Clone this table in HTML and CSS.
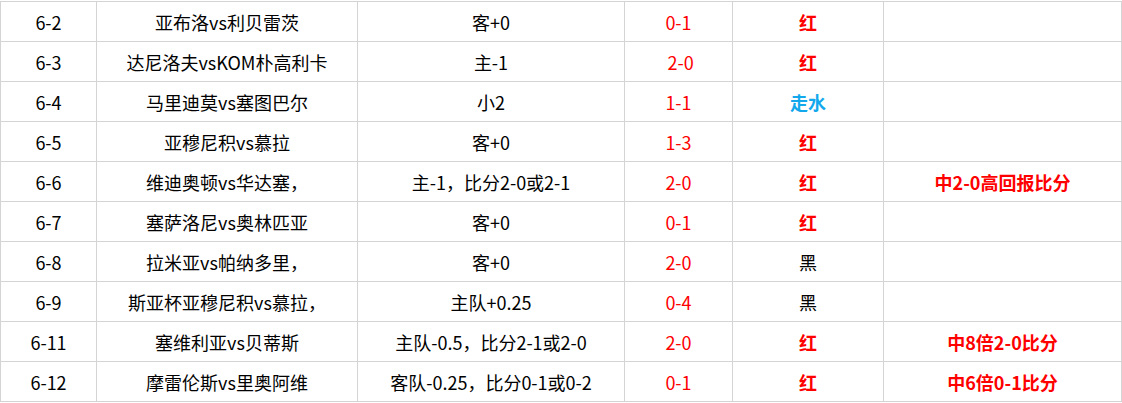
FILE: index.html
```html
<!DOCTYPE html>
<html lang="zh-CN">
<head>
    <meta charset="UTF-8">
    <title>比分记录</title>
<link rel="stylesheet" href="styles.css">
</head>
<body>

<table class="record">
    <colgroup>
        <col class="c-date">
        <col class="c-match">
        <col class="c-tip">
        <col class="c-score">
        <col class="c-result">
        <col class="c-note">
    </colgroup>
    <tr>
        <td>6-2</td><td>亚布洛vs利贝雷茨</td><td>客+0</td>
        <td class="score">0-1</td><td class="win">红</td><td></td>
    </tr>
    <tr>
        <td>6-3</td><td>达尼洛夫vsKOM朴高利卡</td><td>主-1</td>
        <td class="score">&nbsp;2-0</td><td class="win">红</td><td></td>
    </tr>
    <tr>
        <td>6-4</td><td>马里迪莫vs塞图巴尔</td><td>小2</td>
        <td class="score">1-1</td><td class="draw">走水</td><td></td>
    </tr>
    <tr>
        <td>6-5</td><td>亚穆尼积vs慕拉</td><td>客+0</td>
        <td class="score">1-3</td><td class="win">红</td><td></td>
    </tr>
    <tr>
        <td>6-6</td><td>维迪奥顿vs华达塞，</td><td>主-1，比分2-0或2-1</td>
        <td class="score">2-0</td><td class="win">红</td><td class="note">中2-0高回报比分</td>
    </tr>
    <tr>
        <td>6-7</td><td>塞萨洛尼vs奥林匹亚</td><td>客+0</td>
        <td class="score">0-1</td><td class="win">红</td><td></td>
    </tr>
    <tr>
        <td>6-8</td><td>拉米亚vs帕纳多里，</td><td>客+0</td>
        <td class="score">2-0</td><td>黑</td><td></td>
    </tr>
    <tr>
        <td>6-9</td><td>斯亚杯亚穆尼积vs慕拉，</td><td>主队+0.25</td>
        <td class="score">0-4</td><td>黑</td><td></td>
    </tr>
    <tr>
        <td>6-11</td><td>塞维利亚vs贝蒂斯</td><td>主队-0.5，比分2-1或2-0</td>
        <td class="score">2-0</td><td class="win">红</td><td class="note">中8倍2-0比分</td>
    </tr>
    <tr>
        <td>6-12</td><td>摩雷伦斯vs里奥阿维</td><td>客队-0.25，比分0-1或0-2</td>
        <td class="score">0-1</td><td class="win">红</td><td class="note">中6倍0-1比分</td>
    </tr>
</table>

</body>
</html>
```

FILE: styles.css
```css
body {
    margin: 0;
    padding-top: 1px;
    background: #fff;
    font-family: "Noto Sans CJK SC", "Noto Sans", sans-serif;
    font-size: 18px;
    color: #000;
}

.record {
    border-collapse: collapse;
    table-layout: fixed;
    width: 1121px;
}

.c-date { width: 96px; }
.c-match { width: 261px; }
.c-tip { width: 267px; }
.c-score { width: 108px; }
.c-result { width: 151px; }
.c-note { width: 238px; }

.record td {
    height: 39px;
    padding: 0;
    border: 1px solid #d4d4d4;
    text-align: center;
    white-space: nowrap;
    line-height: 1;
}

.score {
    color: #ff0000;
}

.win {
    color: #ff0000;
    font-weight: bold;
}

.draw {
    color: #13a8ec;
    font-weight: bold;
}

.note {
    color: #ff0000;
    font-weight: bold;
}
```
